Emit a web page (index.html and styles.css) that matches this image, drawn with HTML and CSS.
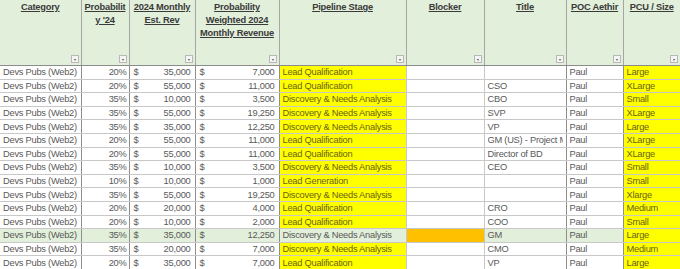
FILE: index.html
```html
<!DOCTYPE html>
<html>
<head>
<meta charset="utf-8">
<link rel="stylesheet" href="styles.css">
</head>
<body>
<table class="sheet">
<colgroup>
<col class="c-cat"><col class="c-prob"><col class="c-rev"><col class="c-wt"><col class="c-stage"><col class="c-block"><col class="c-title"><col class="c-poc"><col class="c-pcu">
</colgroup>
<thead>
<tr>
<th><span class="h">Category</span><i class="dd"></i></th>
<th><span class="h">Probabilit<br>y '24</span><i class="dd"></i></th>
<th><span class="h">2024 Monthly<br>Est. Rev</span><i class="dd"></i></th>
<th><span class="h">Probability<br>Weighted 2024<br>Monthly Revenue</span><i class="dd"></i></th>
<th><span class="h">Pipeline Stage</span><i class="dd"></i></th>
<th><span class="h">Blocker</span><i class="dd"></i></th>
<th><span class="h">Title</span><i class="dd"></i></th>
<th><span class="h">POC Aethir</span><i class="dd"></i></th>
<th><span class="h">PCU / Size</span><i class="dd"></i></th>
</tr>
</thead>
<tbody>
<tr><td>Devs Pubs (Web2)</td><td class="num">20%</td><td class="cur"><span>$</span><span>35,000</span></td><td class="cur"><span>$</span><span>7,000</span></td><td class="yel">Lead Qualification</td><td></td><td></td><td>Paul</td><td class="yel">Large</td></tr>
<tr><td>Devs Pubs (Web2)</td><td class="num">20%</td><td class="cur"><span>$</span><span>55,000</span></td><td class="cur"><span>$</span><span>11,000</span></td><td class="yel">Lead Qualification</td><td></td><td>CSO</td><td>Paul</td><td class="yel">XLarge</td></tr>
<tr><td>Devs Pubs (Web2)</td><td class="num">35%</td><td class="cur"><span>$</span><span>10,000</span></td><td class="cur"><span>$</span><span>3,500</span></td><td class="yel">Discovery &amp; Needs Analysis</td><td></td><td>CBO</td><td>Paul</td><td class="yel">Small</td></tr>
<tr><td>Devs Pubs (Web2)</td><td class="num">35%</td><td class="cur"><span>$</span><span>55,000</span></td><td class="cur"><span>$</span><span>19,250</span></td><td class="yel">Discovery &amp; Needs Analysis</td><td></td><td>SVP</td><td>Paul</td><td class="yel">XLarge</td></tr>
<tr><td>Devs Pubs (Web2)</td><td class="num">35%</td><td class="cur"><span>$</span><span>35,000</span></td><td class="cur"><span>$</span><span>12,250</span></td><td class="yel">Discovery &amp; Needs Analysis</td><td></td><td>VP</td><td>Paul</td><td class="yel">Large</td></tr>
<tr><td>Devs Pubs (Web2)</td><td class="num">20%</td><td class="cur"><span>$</span><span>55,000</span></td><td class="cur"><span>$</span><span>11,000</span></td><td class="yel">Lead Qualification</td><td></td><td><span class="clip">GM (US) - Project Manager</span></td><td>Paul</td><td class="yel">XLarge</td></tr>
<tr><td>Devs Pubs (Web2)</td><td class="num">20%</td><td class="cur"><span>$</span><span>55,000</span></td><td class="cur"><span>$</span><span>11,000</span></td><td class="yel">Lead Qualification</td><td></td><td>Director of BD</td><td>Paul</td><td class="yel">XLarge</td></tr>
<tr><td>Devs Pubs (Web2)</td><td class="num">35%</td><td class="cur"><span>$</span><span>10,000</span></td><td class="cur"><span>$</span><span>3,500</span></td><td class="yel">Discovery &amp; Needs Analysis</td><td></td><td>CEO</td><td>Paul</td><td class="yel">Small</td></tr>
<tr><td>Devs Pubs (Web2)</td><td class="num">10%</td><td class="cur"><span>$</span><span>10,000</span></td><td class="cur"><span>$</span><span>1,000</span></td><td class="yel">Lead Generation</td><td></td><td></td><td>Paul</td><td class="yel">Small</td></tr>
<tr><td>Devs Pubs (Web2)</td><td class="num">35%</td><td class="cur"><span>$</span><span>55,000</span></td><td class="cur"><span>$</span><span>19,250</span></td><td class="yel">Discovery &amp; Needs Analysis</td><td></td><td></td><td>Paul</td><td class="yel">Xlarge</td></tr>
<tr><td>Devs Pubs (Web2)</td><td class="num">20%</td><td class="cur"><span>$</span><span>20,000</span></td><td class="cur"><span>$</span><span>4,000</span></td><td class="yel">Lead Qualification</td><td></td><td>CRO</td><td>Paul</td><td class="yel">Medium</td></tr>
<tr><td>Devs Pubs (Web2)</td><td class="num">20%</td><td class="cur"><span>$</span><span>10,000</span></td><td class="cur"><span>$</span><span>2,000</span></td><td class="yel">Lead Qualification</td><td></td><td>COO</td><td>Paul</td><td class="yel">Small</td></tr>
<tr class="sel"><td>Devs Pubs (Web2)</td><td class="num">35%</td><td class="cur"><span>$</span><span>35,000</span></td><td class="cur"><span>$</span><span>12,250</span></td><td>Discovery &amp; Needs Analysis</td><td class="org"></td><td>GM</td><td>Paul</td><td class="yel">Large</td></tr>
<tr><td>Devs Pubs (Web2)</td><td class="num">35%</td><td class="cur"><span>$</span><span>20,000</span></td><td class="cur"><span>$</span><span>7,000</span></td><td class="yel">Discovery &amp; Needs Analysis</td><td></td><td>CMO</td><td>Paul</td><td class="yel">Medium</td></tr>
<tr><td>Devs Pubs (Web2)</td><td class="num">20%</td><td class="cur"><span>$</span><span>35,000</span></td><td class="cur"><span>$</span><span>7,000</span></td><td class="yel">Lead Qualification</td><td></td><td>VP</td><td>Paul</td><td class="yel">Large</td></tr>
</tbody>
</table>
</body>
</html>
```
FILE: styles.css
```css
html, body {
  margin: 0;
  padding: 0;
  background: #ffffff;
  overflow: hidden;
}
.sheet {
  border-collapse: collapse;
  table-layout: fixed;
  width: 680px;
  font-family: "Liberation Sans", Arial, sans-serif;
  font-size: 9.3px;
  letter-spacing: -0.25px;
  color: #595959;
}
.c-cat { width: 81px; }
.c-prob { width: 48px; }
.c-rev { width: 66px; }
.c-wt { width: 84px; }
.c-stage { width: 127px; }
.c-block { width: 78px; }
.c-title { width: 82px; }
.c-poc { width: 57px; }
.c-pcu { width: 57px; }

.sheet th {
  position: relative;
  height: 65px;
  padding: 0;
  vertical-align: top;
  background: #e2efda;
  border-right: 1px solid #a6a6a6;
  border-bottom: 1px solid #8c8c8c;
  color: #3a3a3a;
  font-weight: bold;
  font-size: 9.3px;
  letter-spacing: -0.2px;
  line-height: 13px;
  text-align: center;
  white-space: nowrap;
}
.sheet th:last-child { border-right: none; }
.sheet th .h {
  display: inline-block;
  padding-top: 1px;
  text-decoration: underline;
}
.dd {
  position: absolute;
  right: 2px;
  bottom: 2px;
  width: 8px;
  height: 8px;
  box-sizing: border-box;
  background: #f4f4f4;
  border: 1px solid #b8b8b8;
}
.dd::after {
  content: "";
  position: absolute;
  left: 2px;
  top: 3px;
  border-left: 1.5px solid transparent;
  border-right: 1.5px solid transparent;
  border-top: 2px solid #555;
}
.sheet td {
  height: 13.6px;
  box-sizing: border-box;
  padding: 0 3px;
  line-height: 12px;
  white-space: nowrap;
  overflow: hidden;
  border-right: 1px solid #8e8e8e;
  border-bottom: 1px solid #c8c8c8;
  vertical-align: middle;
}
.sheet td:last-child { border-right: none; }
.clip { display: block; overflow: hidden; }
.sheet td.num { text-align: right; padding-right: 2px; }
.sheet td.cur span:first-child { float: left; padding-left: 1px; }
.sheet td.cur span:last-child { float: right; padding-right: 1px; }
.sheet td.yel { background: #ffff00; color: #6b6212; }
.sel td { background: #e2efda; }
.sel td.yel { background: #ffff00; }
.sel td.org { background: #ffc000; }
.sheet tr td:nth-child(5),
.sheet tr td:nth-child(6) { border-right-color: #c8c8c8; }
```
